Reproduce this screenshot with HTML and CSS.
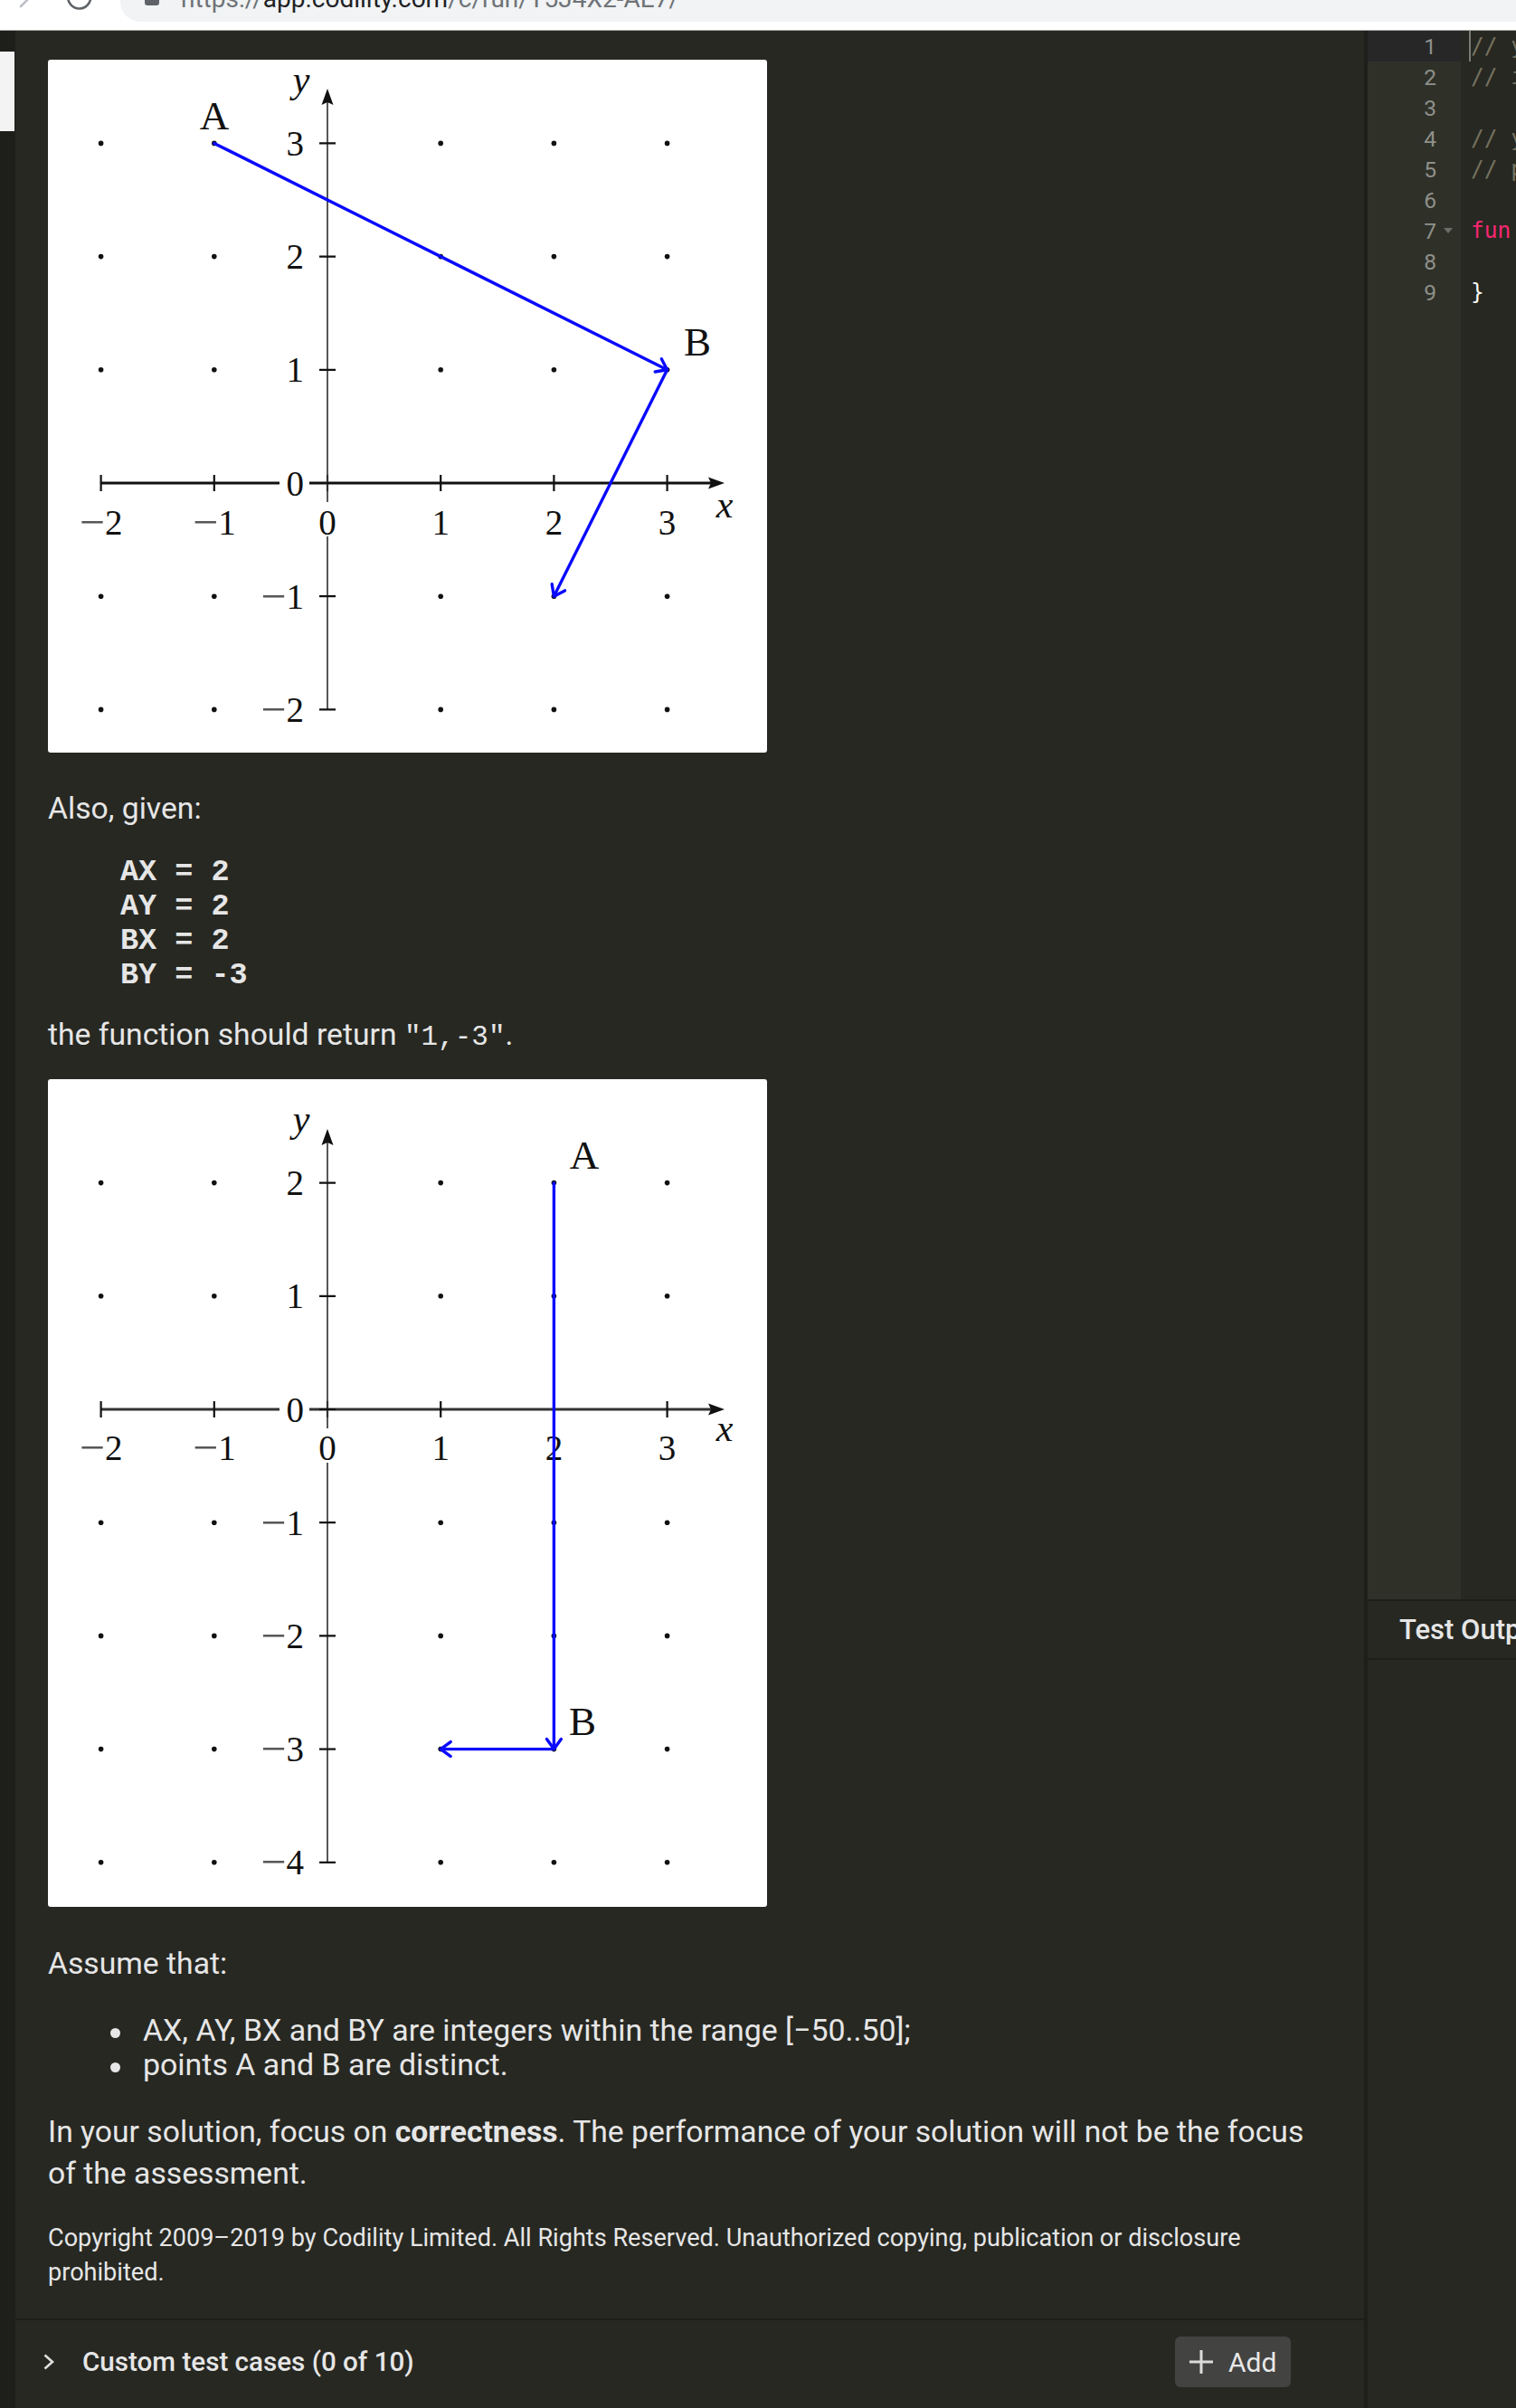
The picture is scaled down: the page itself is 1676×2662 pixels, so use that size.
FILE: index.html
```html
<!DOCTYPE html>
<html lang="en">
<head>
<meta charset="utf-8">
<title>Codility task</title>
<link rel="stylesheet" href="styles.css">
</head>
<body>
<header class="chrome">
  <svg class="chrome-icons" width="133" height="33" viewBox="0 0 133 33">
    <path d="M23 7L33 -3" fill="none" stroke="#bdc1c6" stroke-width="2.6" stroke-linecap="round"/>
    <path d="M75.2 -4A12.5 12.5 0 1 0 100 -5" fill="none" stroke="#5f6368" stroke-width="2.6"/>
  </svg>
  <div class="omnibox">
    <span class="lock"></span>
    <span class="url">https://<b>app.codility.com</b>/c/run/T5J4X2-AE7/</span>
  </div>
</header>

<div class="app">
  <aside class="rail"><div class="rail-tab"></div></aside>

  <main class="main">
    <section class="content">
      <svg class="plot" width="795" height="766" viewBox="0 0 795 766">
        <rect width="795" height="766" rx="3" fill="#fff"/>
        <g fill="#111">
          <circle cx="58.6" cy="92.4" r="2.8"/><circle cx="183.8" cy="92.4" r="2.8"/><circle cx="434.2" cy="92.4" r="2.8"/><circle cx="559.4" cy="92.4" r="2.8"/><circle cx="684.6" cy="92.4" r="2.8"/>
          <circle cx="58.6" cy="217.6" r="2.8"/><circle cx="183.8" cy="217.6" r="2.8"/><circle cx="434.2" cy="217.6" r="2.8"/><circle cx="559.4" cy="217.6" r="2.8"/><circle cx="684.6" cy="217.6" r="2.8"/>
          <circle cx="58.6" cy="342.8" r="2.8"/><circle cx="183.8" cy="342.8" r="2.8"/><circle cx="434.2" cy="342.8" r="2.8"/><circle cx="559.4" cy="342.8" r="2.8"/><circle cx="684.6" cy="342.8" r="2.8"/>
          <circle cx="58.6" cy="593.2" r="2.8"/><circle cx="183.8" cy="593.2" r="2.8"/><circle cx="434.2" cy="593.2" r="2.8"/><circle cx="559.4" cy="593.2" r="2.8"/><circle cx="684.6" cy="593.2" r="2.8"/>
          <circle cx="58.6" cy="718.4" r="2.8"/><circle cx="183.8" cy="718.4" r="2.8"/><circle cx="434.2" cy="718.4" r="2.8"/><circle cx="559.4" cy="718.4" r="2.8"/><circle cx="684.6" cy="718.4" r="2.8"/>
        </g>
        <path d="M58.6 468H734" stroke="#111" stroke-width="2.8"/>
        <path d="M58.6 459V477M183.8 459V477M309 459V477M434.2 459V477M559.4 459V477M684.6 459V477" stroke="#111" stroke-width="2.2"/>
        <path d="M309 718.4V46" stroke="#3a3a3a" stroke-width="1.7"/>
        <path d="M300 92.4H318M300 217.6H318M300 342.8H318M300 468H318M300 593.2H318M300 718.4H318" stroke="#111" stroke-width="2.2"/>
        <path d="M748 468L730 461.5L733 468L730 474.5Z" fill="#111"/>
        <path d="M309 32L302.5 50L309 47L315.5 50Z" fill="#111"/>
        <rect x="256" y="451" width="33" height="34" fill="#fff"/>
        <rect x="297" y="489" width="24" height="38" fill="#fff"/>
        <g class="tick-labels" text-anchor="middle">
          <text x="58.6" y="524.5"><tspan class="mn" dy="3">−</tspan><tspan dy="-3">2</tspan></text>
          <text x="183.8" y="524.5"><tspan class="mn" dy="3">−</tspan><tspan dy="-3">1</tspan></text>
          <text x="309" y="524.5">0</text><text x="434.2" y="524.5">1</text><text x="559.4" y="524.5">2</text><text x="684.6" y="524.5">3</text>
        </g>
        <g class="tick-labels" text-anchor="end">
          <text x="283" y="105.9">3</text><text x="283" y="231.1">2</text><text x="283" y="356.3">1</text><text x="283" y="481.5">0</text>
          <text x="283" y="606.7"><tspan class="mn" dy="3">−</tspan><tspan dy="-3">1</tspan></text>
          <text x="283" y="731.9"><tspan class="mn" dy="3">−</tspan><tspan dy="-3">2</tspan></text>
        </g>
        <g class="axis-names" text-anchor="middle">
          <text x="280" y="36">y</text><text x="748" y="506">x</text>
        </g>
        <g class="point-names" text-anchor="middle">
          <text x="184" y="77">A</text><text x="718" y="327">B</text>
        </g>
        <g fill="none" stroke="#0a0aff" stroke-width="3.4" stroke-linecap="round" stroke-linejoin="round">
          <path d="M183.8 92.4L683 342"/>
          <path d="M671.2 345L684.6 342.8L678.3 330.7"/>
          <path d="M684.6 342.8L560 592"/>
          <path d="M557.2 579.8L559.4 593.2L571.5 586.9"/>
        </g>
      </svg>

      <p class="txt gap-also">Also, given:</p>
      <pre class="sample">AX = 2
AY = 2
BX = 2
BY = -3</pre>
      <p class="txt gap-return">the function should return <code>"1,-3"</code>.</p>

      <svg class="plot gap-plot2" width="795" height="915" viewBox="0 0 795 915">
        <rect width="795" height="915" rx="3" fill="#fff"/>
        <g fill="#111">
          <circle cx="58.6" cy="114.6" r="2.8"/><circle cx="183.8" cy="114.6" r="2.8"/><circle cx="434.2" cy="114.6" r="2.8"/><circle cx="559.4" cy="114.6" r="2.8"/><circle cx="684.6" cy="114.6" r="2.8"/>
          <circle cx="58.6" cy="239.8" r="2.8"/><circle cx="183.8" cy="239.8" r="2.8"/><circle cx="434.2" cy="239.8" r="2.8"/><circle cx="559.4" cy="239.8" r="2.8"/><circle cx="684.6" cy="239.8" r="2.8"/>
          <circle cx="58.6" cy="490.2" r="2.8"/><circle cx="183.8" cy="490.2" r="2.8"/><circle cx="434.2" cy="490.2" r="2.8"/><circle cx="559.4" cy="490.2" r="2.8"/><circle cx="684.6" cy="490.2" r="2.8"/>
          <circle cx="58.6" cy="615.4" r="2.8"/><circle cx="183.8" cy="615.4" r="2.8"/><circle cx="434.2" cy="615.4" r="2.8"/><circle cx="559.4" cy="615.4" r="2.8"/><circle cx="684.6" cy="615.4" r="2.8"/>
          <circle cx="58.6" cy="740.6" r="2.8"/><circle cx="183.8" cy="740.6" r="2.8"/><circle cx="434.2" cy="740.6" r="2.8"/><circle cx="559.4" cy="740.6" r="2.8"/><circle cx="684.6" cy="740.6" r="2.8"/>
          <circle cx="58.6" cy="865.8" r="2.8"/><circle cx="183.8" cy="865.8" r="2.8"/><circle cx="434.2" cy="865.8" r="2.8"/><circle cx="559.4" cy="865.8" r="2.8"/><circle cx="684.6" cy="865.8" r="2.8"/>
        </g>
        <path d="M58.6 365H734" stroke="#333" stroke-width="3"/>
        <path d="M58.6 356V374M183.8 356V374M309 356V374M434.2 356V374M559.4 356V374M684.6 356V374" stroke="#111" stroke-width="2.2"/>
        <path d="M309 865.8V69" stroke="#3a3a3a" stroke-width="1.7"/>
        <path d="M300 114.6H318M300 239.8H318M300 365H318M300 490.2H318M300 615.4H318M300 740.6H318M300 865.8H318" stroke="#111" stroke-width="2.2"/>
        <path d="M748 365L730 358.5L733 365L730 371.5Z" fill="#111"/>
        <path d="M309 55L302.5 73L309 70L315.5 73Z" fill="#111"/>
        <rect x="256" y="348" width="33" height="34" fill="#fff"/>
        <rect x="297" y="386" width="24" height="38" fill="#fff"/>
        <g class="tick-labels" text-anchor="middle">
          <text x="58.6" y="420.5"><tspan class="mn" dy="3">−</tspan><tspan dy="-3">2</tspan></text>
          <text x="183.8" y="420.5"><tspan class="mn" dy="3">−</tspan><tspan dy="-3">1</tspan></text>
          <text x="309" y="420.5">0</text><text x="434.2" y="420.5">1</text><text x="559.4" y="420.5">2</text><text x="684.6" y="420.5">3</text>
        </g>
        <g class="tick-labels" text-anchor="end">
          <text x="283" y="128.1">2</text><text x="283" y="253.3">1</text><text x="283" y="378.5">0</text>
          <text x="283" y="503.7"><tspan class="mn" dy="3">−</tspan><tspan dy="-3">1</tspan></text>
          <text x="283" y="628.9"><tspan class="mn" dy="3">−</tspan><tspan dy="-3">2</tspan></text>
          <text x="283" y="754.1"><tspan class="mn" dy="3">−</tspan><tspan dy="-3">3</tspan></text>
          <text x="283" y="879.3"><tspan class="mn" dy="3">−</tspan><tspan dy="-3">4</tspan></text>
        </g>
        <g class="axis-names" text-anchor="middle">
          <text x="280" y="58">y</text><text x="748" y="400">x</text>
        </g>
        <g class="point-names" text-anchor="middle">
          <text x="593" y="99">A</text><text x="591" y="725">B</text>
        </g>
        <g fill="none" stroke="#0a0aff" stroke-width="3.4" stroke-linecap="round" stroke-linejoin="round">
          <path d="M559.4 114.6V739"/>
          <path d="M551.4 729.6L559.4 740.6L567.4 729.6"/>
          <path d="M559.4 740.6H436"/>
          <path d="M445.2 732.6L434.2 740.6L445.2 748.6"/>
        </g>
      </svg>

      <p class="txt gap-assume">Assume that:</p>
      <ul class="facts">
        <li>AX, AY, BX and BY are integers within the range [−50..50];</li>
        <li>points A and B are distinct.</li>
      </ul>
      <p class="txt gap-focus">In your solution, focus on <strong>correctness</strong>. The performance of your solution will not be the focus of the assessment.</p>
      <p class="copyright">Copyright 2009–2019 by Codility Limited. All Rights Reserved. Unauthorized copying, publication or disclosure prohibited.</p>
    </section>

    <footer class="footer">
      <div class="toggle">
        <svg class="chev" width="12" height="18" viewBox="0 0 12 18"><path d="M1.5 1.5L10 9L1.5 16.5" fill="none" stroke="#e0e0e0" stroke-width="2.6"/></svg>
        <span class="toggle-label">Custom test cases (0 of 10)</span>
      </div>
      <button class="add" type="button">
        <svg width="26" height="26" viewBox="0 0 26 26"><path d="M13 0V26M0 13H26" stroke="#dcdcdc" stroke-width="3"/></svg>
        <span>Add</span>
      </button>
    </footer>
  </main>

  <section class="right">
    <div class="editor">
      <div class="gutter">
        <div class="gline active"><span>1</span><i class="fold"></i></div>
        <div class="gline"><span>2</span><i class="fold"></i></div>
        <div class="gline"><span>3</span><i class="fold"></i></div>
        <div class="gline"><span>4</span><i class="fold"></i></div>
        <div class="gline"><span>5</span><i class="fold"></i></div>
        <div class="gline"><span>6</span><i class="fold"></i></div>
        <div class="gline"><span>7</span><i class="fold open"></i></div>
        <div class="gline"><span>8</span><i class="fold"></i></div>
        <div class="gline"><span>9</span><i class="fold"></i></div>
      </div>
      <div class="code">
        <div class="cline"><span class="cursor"></span><span class="cm">// you can also use imports, for example:</span></div>
        <div class="cline"><span class="cm">// import kotlin.math.*</span></div>
        <div class="cline"> </div>
        <div class="cline"><span class="cm">// you can write to stdout for debugging purposes, e.g.</span></div>
        <div class="cline"><span class="cm">// println("this is a debug message")</span></div>
        <div class="cline"> </div>
        <div class="cline"><span class="kw">fun</span> solution(AX: Int, AY: Int, BX: Int, BY: Int): String {</div>
        <div class="cline">    <span class="cm">// write your code in Kotlin</span></div>
        <div class="cline">}</div>
      </div>
    </div>
    <div class="test-head">Test Output</div>
    <div class="test-body"></div>
  </section>
</div>
</body>
</html>
```

FILE: styles.css
```css
* { box-sizing: border-box; }
html, body { margin: 0; padding: 0; }
body {
  width: 1676px;
  height: 2662px;
  overflow: hidden;
  background: #272822;
  font-family: Roboto, "Noto Sans", sans-serif;
  color: #e6e6e6;
}

/* browser chrome strip */
.chrome {
  height: 34px;
  background: #fff;
  border-bottom: 1px solid #a9a9a9;
  display: flex;
  overflow: hidden;
}
.chrome-icons { flex: none; display: block; }
.omnibox {
  flex: 1;
  height: 24px;
  background: #f1f3f4;
  border-bottom-left-radius: 22px;
  display: flex;
  align-items: flex-start;
  overflow: hidden;
}
.lock {
  flex: none;
  width: 16px;
  height: 6px;
  margin-left: 27px;
  background: #5f6368;
  border-radius: 0 0 3px 3px;
}
.url {
  margin-left: 24px;
  margin-top: -17.6px;
  font-size: 28px;
  line-height: 34px;
  white-space: nowrap;
  color: #6f7378;
}
.url b { font-weight: 400; color: #202124; }

/* app layout */
.app { display: flex; height: 2628px; }
.rail { flex: none; width: 17px; background: #1e1f1a; }
.rail-tab { margin-top: 23px; width: 16px; height: 88px; background: #f3f3f3; }

.main {
  flex: none;
  width: 1491px;
  display: flex;
  flex-direction: column;
  background: #272822;
}
.content {
  flex: 1;
  min-height: 0;
  overflow: hidden;
  display: flex;
  flex-direction: column;
  padding: 32px 40px 0 36px;
}
.plot { display: block; align-self: flex-start; flex: none; }
.plot text { font-family: "Liberation Serif", "DejaVu Serif", serif; fill: #111; }
.tick-labels { font-size: 39px; }
.tick-labels .mn { font-size: 50px; fill: #555; }
.axis-names { font-size: 42px; font-style: italic; }
.point-names { font-size: 45px; }

.txt {
  margin: 0;
  font-size: 33.7px;
  line-height: 46px;
}
.txt strong { font-weight: 700; }
.txt code {
  font-family: "Liberation Mono", "DejaVu Sans Mono", monospace;
  font-size: 31px;
  line-height: 1;
}
.gap-also { margin-top: 39px; }
.sample {
  margin: 28px 0 0;
  padding-left: 80px;
  font-family: "Liberation Mono", "DejaVu Sans Mono", monospace;
  font-size: 33.5px;
  line-height: 38px;
  font-weight: 700;
  color: #e6e6e6;
}
.gap-return { margin-top: 24px; }
.gap-plot2 { margin-top: 26px; }
.gap-assume { margin-top: 40px; }

.facts {
  margin: 32px 0 0;
  padding: 0 0 0 69px;
  list-style: none;
  font-size: 33.9px;
  line-height: 38px;
}
.facts li::before {
  content: "";
  display: inline-block;
  width: 11px;
  height: 11px;
  border-radius: 50%;
  background: #e6e6e6;
  margin-right: 25px;
  vertical-align: 3.5px;
}
.gap-focus { margin-top: 32px; }
.copyright {
  margin: 29px 0 0;
  font-size: 27.1px;
  line-height: 38px;
}

/* footer bar */
.footer {
  flex: none;
  height: 99px;
  border-top: 2px solid #1d1e1a;
  display: flex;
  align-items: flex-start;
  padding: 18px 81px 0 31px;
}
.toggle {
  height: 56px;
  display: flex;
  align-items: center;
}
.chev { display: block; flex: none; }
.toggle-label {
  margin-left: 31px;
  font-size: 29.6px;
  font-weight: 500;
  color: #e6e6e6;
  white-space: nowrap;
}
.add {
  margin-left: auto;
  width: 128px;
  height: 56px;
  border: 0;
  border-radius: 6px;
  background: #434341;
  display: flex;
  align-items: center;
  gap: 17px;
  padding: 0 0 0 16px;
  font-family: Roboto, "Noto Sans", sans-serif;
  font-size: 30px;
  color: #e8e8e8;
}
.add svg { display: block; flex: none; }

/* right side: editor + output */
.right {
  flex: 1;
  min-width: 0;
  border-left: 4px solid #1e1f1b;
  display: flex;
  flex-direction: column;
  background: #272822;
}
.editor {
  flex: none;
  height: 1736px;
  border-bottom: 2px solid #1e1f1b;
  display: flex;
  overflow: hidden;
}
.gutter {
  flex: none;
  width: 103px;
  background: #2f3129;
  color: #8f908a;
  font-size: 24.5px;
}
.gline {
  height: 34px;
  display: flex;
  align-items: center;
  justify-content: flex-end;
  padding-right: 9px;
}
.gline.active { background: #272727; }
.fold { width: 18px; height: 6px; display: block; flex: none; }
.fold.open { position: relative; }
.fold.open::after {
  content: "";
  position: absolute;
  right: 0;
  top: 0;
  border-left: 5.5px solid transparent;
  border-right: 5.5px solid transparent;
  border-top: 6px solid #6d6e68;
}
.code {
  flex: 1;
  min-width: 0;
  overflow: hidden;
  font-family: "DejaVu Sans Mono", "Liberation Mono", monospace;
  font-size: 24.5px;
  color: #f8f8f2;
}
.cline {
  height: 34px;
  line-height: 34px;
  padding-left: 11px;
  white-space: pre;
}
.cursor {
  display: inline-block;
  width: 2px;
  height: 34px;
  margin-left: -2px;
  vertical-align: top;
  background: #7a7a76;
}
.cm { color: #75715e; }
.kw { color: #f92672; }

.test-head {
  flex: none;
  height: 65px;
  border-bottom: 2px solid #1e1f1b;
  display: flex;
  align-items: center;
  padding-left: 35px;
  font-size: 31px;
  font-weight: 500;
  color: #e6e6e6;
  white-space: nowrap;
  overflow: hidden;
}
.test-body { flex: 1; }
```
